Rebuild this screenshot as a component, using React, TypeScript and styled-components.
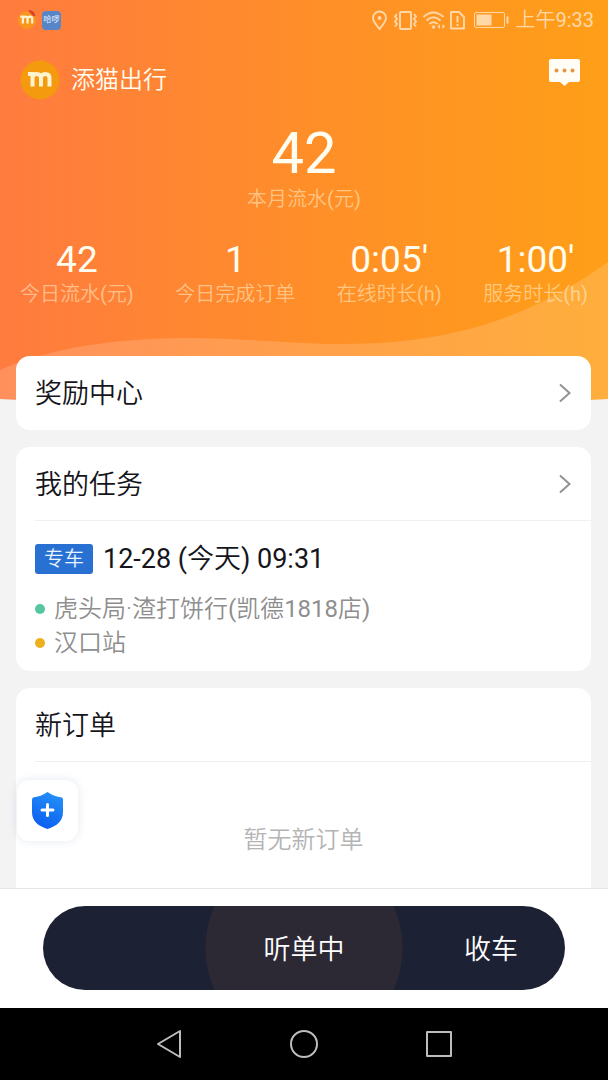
import React from "react";
import styled, { createGlobalStyle } from "styled-components";

const GlobalStyle = createGlobalStyle`
  * { box-sizing: border-box; }
  body {
    margin: 0;
    background: #f3f3f3;
    font-family: Roboto, "Noto Sans CJK SC", sans-serif;
    font-weight: 350;
    color: #15151b;
  }
  h1, h2, p, dl, dt, dd, ul { margin: 0; padding: 0; font-weight: inherit; }
  button {
    border: 0;
    padding: 0;
    background: none;
    font: inherit;
    color: inherit;
    cursor: pointer;
  }
`;

const Page = styled.div`
  position: relative;
  display: flex;
  flex-direction: column;
  min-height: 100vh;
`;

const Latin = styled.span`
  font-weight: 400;
`;

const Hero = styled.header`
  position: relative;
  padding-bottom: 95px;
  color: #fffdf0;
`;

const HeroArt = styled.svg`
  position: absolute;
  inset: 0;
  z-index: -1;
  width: 100%;
  height: 100%;
`;

const StatusBar = styled.div`
  display: flex;
  align-items: center;
  justify-content: space-between;
  height: 40px;
  padding: 0 14px 0 17px;
  color: #ffd8a8;
`;

const StatusGroup = styled.div`
  display: flex;
  align-items: center;
  gap: 5px;
`;

const Clock = styled.span`
  font-size: 20px;
  line-height: 26px;
`;

const HelloBadge = styled.span`
  display: grid;
  place-items: center;
  width: 19px;
  height: 19px;
  border-radius: 4px;
  background: #5686c8;
  color: #e6eefa;
  font-size: 8px;
  line-height: 8px;
  font-weight: 400;
`;

const TitleBar = styled.div`
  display: flex;
  align-items: center;
  height: 80px;
  padding: 0 28px 0 20px;
`;

const BrandName = styled.h1`
  flex: 1;
  margin-left: 11px;
  font-size: 24px;
  line-height: 32px;
`;

const MessageButton = styled.button`
  display: flex;
  height: 42px;
`;

const MonthTotal = styled.div`
  display: flex;
  flex-direction: column;
  align-items: center;
`;

const MonthValue = styled.p`
  font-size: 58px;
  line-height: 66px;
  font-weight: 400;
`;

const Caption = styled.dt`
  font-size: 20px;
  line-height: 26px;
  color: rgba(255, 240, 205, 0.56);
`;

const MonthCaption = styled(Caption).attrs({ as: "p" })``;

const Stats = styled.dl`
  display: flex;
  justify-content: space-between;
  padding: 27px 20px 0;
`;

const Stat = styled.div`
  display: flex;
  flex-direction: column-reverse;
  align-items: center;
`;

const StatValue = styled.dd`
  font-size: 37px;
  line-height: 42px;
  font-weight: 400;
`;

const Content = styled.main`
  position: relative;
  display: flex;
  flex: 1;
  flex-direction: column;
  gap: 17px;
  margin-top: -46px;
  padding: 0 17px 0 16px;
`;

const Card = styled.section<{ $open?: boolean }>`
  display: flex;
  flex-direction: column;
  flex: ${(p) => (p.$open ? "1" : "none")};
  border-radius: ${(p) => (p.$open ? "14px 14px 0 0" : "14px")};
  background: #fff;
`;

const CardHeader = styled.div<{ $ruled?: boolean }>`
  display: flex;
  align-items: center;
  justify-content: space-between;
  height: 74px;
  margin-left: 19px;
  padding-right: 19px;
  border-bottom: ${(p) => (p.$ruled ? "1px solid #f0f0f0" : "0")};
`;

const CardTitle = styled.h2`
  padding-top: 2px;
  font-size: 27px;
  line-height: 36px;
`;

const IconButton = styled.button`
  display: flex;
`;

const Task = styled.div`
  padding: 18px 19px 11px;
`;

const TaskHead = styled.div`
  display: flex;
  align-items: center;
  gap: 10px;
  margin-bottom: 13px;
`;

const Tag = styled.span`
  padding: 0 9px;
  border-radius: 3px;
  background: #2871d2;
  color: #e9f3ff;
  font-size: 20px;
  line-height: 30px;
`;

const TaskTime = styled.time`
  font-size: 27px;
  line-height: 40px;
`;

const Stops = styled.ul`
  list-style: none;
`;

const Stop = styled.li<{ $dot: string }>`
  display: flex;
  align-items: center;
  gap: 9px;
  font-size: 24px;
  line-height: 34px;
  color: #8e8e8e;

  &::before {
    content: "";
    width: 10px;
    height: 10px;
    border-radius: 50%;
    background: ${(p) => p.$dot};
  }
`;

const Empty = styled.p`
  padding: 61px 0 31px;
  text-align: center;
  font-size: 24px;
  line-height: 34px;
  color: #b4b4b6;
`;

const SafetyButton = styled.button`
  position: absolute;
  left: 17px;
  bottom: 47px;
  display: grid;
  place-items: center;
  width: 61px;
  height: 61px;
  border-radius: 12px;
  background: #fff;
  box-shadow: 0 0 8px rgba(60, 90, 150, 0.14);
`;

const ActionBar = styled.div`
  padding: 17px 43px 18px;
  border-top: 1px solid #e6e6e6;
  background: #fff;
`;

const Pill = styled.div`
  display: grid;
  grid-template-columns: 148fr 226fr 148fr;
  height: 84px;
  padding-top: 3px;
  border-radius: 42px;
  overflow: hidden;
  background: radial-gradient(circle 99px at center, #2d2934 98px, #1d2134 99px);
`;

const PillButton = styled.button<{ $column: number }>`
  grid-column: ${(p) => p.$column};
  font-size: 27px;
  line-height: 36px;
  color: #fff;
`;

const NavBar = styled.nav`
  display: grid;
  grid-template-columns: repeat(3, 1fr);
  height: 72px;
  padding: 0 101px;
  background: #000;
`;

const NavButton = styled.button`
  display: grid;
  place-items: center;
`;

const stats = [
  { label: "今日流水(元)", value: "42" },
  { label: "今日完成订单", value: "1" },
  { label: "在线时长(h)", value: "0:05'" },
  { label: "服务时长(h)", value: "1:00'" },
];

// Latin runs are set one step heavier than the Chinese text around them.
const Mixed = ({ text }: { text: string }) => (
  <span>
    {text.split(/([\x21-\x7e]+)/).map((run, i) => (i % 2 ? <Latin key={i}>{run}</Latin> : run))}
  </span>
);

const MarkM = () => (
  <path
    d="M8 14H12.500V26.500M12.500 19C12.500 15.500 14 14 16.700 14S21 15.500 21 18V26.500M21 19C21 15.500 22.500 14 25.300 14S29.500 15.500 29.500 18V26.500"
    fill="none"
    stroke="#fff3cf"
    strokeWidth="4"
  />
);

const Logo = () => (
  <svg width="40" height="40" viewBox="0 0 40 40" aria-hidden="true">
    <circle cx="20" cy="20" r="19.500" fill="#f39a0e" />
    <MarkM />
  </svg>
);

const SmallLogo = () => (
  <svg width="20" height="22" viewBox="0 0 20 22" aria-hidden="true">
    <circle cx="10" cy="11" r="9" fill="#f8961e" />
    <g transform="translate(-1 0) scale(.55)"><MarkM /></g>
    <path d="M11 1.500q6-1.500 7.500 6l-3-1z" fill="#dc3f2c" />
  </svg>
);

const StatusIcons = () => (
  <svg width="140" height="24" viewBox="0 0 140 24" fill="none" stroke="currentColor" strokeWidth="1.900" aria-hidden="true">
    <path d="M9.500 21C6 16.500 3 13.500 3 10a6.500 6.500 0 0 1 13 0c0 3.500-3 6.500-6.500 11z" />
    <circle cx="9.500" cy="10" r="2" fill="currentColor" stroke="none" />
    <rect x="30" y="4" width="11" height="17" rx="1" />
    <path d="M27 6l-2 2.500 2 2.500-2 2.500 2 2.500-2 2.500M44 6l2 2.500-2 2.500 2 2.500-2 2.500 2 2.500" />
    <path d="M53.500 9q10-9 20 0M56.500 12.500q7-6.500 14 0M59.500 16q4-3.500 8 0" />
    <circle cx="63.500" cy="19" r="1.800" fill="currentColor" stroke="none" />
    <path d="M70 16l-2.500 2.500L70 21zM72.500 16l2.500 2.500-2.500 2.500z" fill="currentColor" stroke="none" />
    <path d="M81 4h8l5 5v11.500H81z" strokeLinejoin="round" />
    <path d="M87.500 8v6.500M87.500 16v2" strokeWidth="2" />
    <rect x="104.500" y="4.500" width="30" height="15" rx="1.500" strokeWidth="1" />
    <rect x="106.500" y="6.500" width="15" height="11" fill="currentColor" stroke="none" />
    <path d="M137.500 8.500v7" strokeWidth="2" />
  </svg>
);

const Chevron = () => (
  <svg width="14" height="20" viewBox="0 0 14 20" aria-hidden="true">
    <path d="M2 1.500l9.500 8.500L2 18.500" fill="none" stroke="#929292" strokeWidth="2" />
  </svg>
);

export default function App() {
  return (
    <>
      <GlobalStyle />
      <Page>
        <Hero>
          <HeroArt viewBox="0 0 608 402" preserveAspectRatio="none" aria-hidden="true">
            <defs>
              <linearGradient id="heroFill" x1="0" y1="0" x2="1" y2="0">
                <stop offset="0" stopColor="#ff7b3f" />
                <stop offset="0.500" stopColor="#ff8e29" />
                <stop offset="1" stopColor="#ff9f18" />
              </linearGradient>
            </defs>
            <path d="M0 0H608V399Q304 416 0 399Z" fill="url(#heroFill)" />
            <path
              d="M0 370C50 348 115 338 190 338C245 338 290 344 345 344C450 344 530 318 608 262V399Q304 416 0 399Z"
              fill="#fff"
              fillOpacity="0.160"
            />
          </HeroArt>
          <StatusBar>
            <StatusGroup>
              <SmallLogo />
              <HelloBadge>哈啰</HelloBadge>
            </StatusGroup>
            <StatusGroup>
              <StatusIcons />
              <Clock><Mixed text="上午9:33" /></Clock>
            </StatusGroup>
          </StatusBar>
          <TitleBar>
            <Logo />
            <BrandName>添猫出行</BrandName>
            <MessageButton aria-label="消息">
              <svg width="31" height="28" viewBox="0 0 31 28" aria-hidden="true">
                <path d="M2 0H29a2 2 0 0 1 2 2V21a2 2 0 0 1-2 2H20l-4.500 4L11 23H2a2 2 0 0 1-2-2V2a2 2 0 0 1 2-2z" fill="#fffdf5" />
                <g fill="#e8963f">
                  <circle cx="7.500" cy="11.500" r="2" />
                  <circle cx="15.500" cy="11.500" r="2" />
                  <circle cx="23.500" cy="11.500" r="2" />
                </g>
              </svg>
            </MessageButton>
          </TitleBar>
          <MonthTotal>
            <MonthValue>42</MonthValue>
            <MonthCaption><Mixed text="本月流水(元)" /></MonthCaption>
          </MonthTotal>
          <Stats>
            {stats.map((s) => (
              <Stat key={s.label}>
                <Caption><Mixed text={s.label} /></Caption>
                <StatValue>{s.value}</StatValue>
              </Stat>
            ))}
          </Stats>
        </Hero>

        <Content>
          <Card>
            <CardHeader>
              <CardTitle>奖励中心</CardTitle>
              <IconButton aria-label="奖励中心"><Chevron /></IconButton>
            </CardHeader>
          </Card>
          <Card>
            <CardHeader $ruled>
              <CardTitle>我的任务</CardTitle>
              <IconButton aria-label="我的任务"><Chevron /></IconButton>
            </CardHeader>
            <Task>
              <TaskHead>
                <Tag>专车</Tag>
                <TaskTime dateTime="12-28T09:31"><Mixed text="12-28 (今天) 09:31" /></TaskTime>
              </TaskHead>
              <Stops>
                <Stop $dot="#55c7a0"><Mixed text="虎头局·渣打饼行(凯德1818店)" /></Stop>
                <Stop $dot="#efb01d">汉口站</Stop>
              </Stops>
            </Task>
          </Card>
          <Card $open>
            <CardHeader $ruled>
              <CardTitle>新订单</CardTitle>
            </CardHeader>
            <Empty>暂无新订单</Empty>
          </Card>
          <SafetyButton aria-label="安全中心">
            <svg width="31" height="37" viewBox="0 0 31 37" aria-hidden="true">
              <defs>
                <linearGradient id="shieldFill" x1="0.700" y1="0" x2="0.300" y2="1">
                  <stop offset="0" stopColor="#2590f8" />
                  <stop offset="1" stopColor="#0a5df0" />
                </linearGradient>
              </defs>
              <path d="M15.500 0Q22 4.500 30 5.500Q31 6 31 8V20C31 29 25 34 15.500 37C6 34 0 29 0 20V8Q0 6 1 5.500Q9 4.500 15.500 0Z" fill="url(#shieldFill)" />
              <path d="M15.500 12.500v11M10 18h11" stroke="#fff" strokeWidth="3" strokeLinecap="round" />
            </svg>
          </SafetyButton>
        </Content>

        <ActionBar>
          <Pill>
            <PillButton $column={2}>听单中</PillButton>
            <PillButton $column={3}>收车</PillButton>
          </Pill>
        </ActionBar>
        <NavBar>
          <NavButton aria-label="返回">
            <svg width="28" height="30" viewBox="0 0 28 30" fill="none" stroke="#bdbdbd" strokeWidth="2" strokeLinejoin="round" aria-hidden="true">
              <path d="M25 2V28L3 15Z" />
            </svg>
          </NavButton>
          <NavButton aria-label="主屏幕">
            <svg width="30" height="30" viewBox="0 0 30 30" fill="none" stroke="#bdbdbd" strokeWidth="2" aria-hidden="true">
              <circle cx="15" cy="15" r="13" />
            </svg>
          </NavButton>
          <NavButton aria-label="最近任务">
            <svg width="28" height="28" viewBox="0 0 28 28" fill="none" stroke="#bdbdbd" strokeWidth="2" strokeLinejoin="round" aria-hidden="true">
              <rect x="2" y="2" width="24" height="24" />
            </svg>
          </NavButton>
        </NavBar>
      </Page>
    </>
  );
}
